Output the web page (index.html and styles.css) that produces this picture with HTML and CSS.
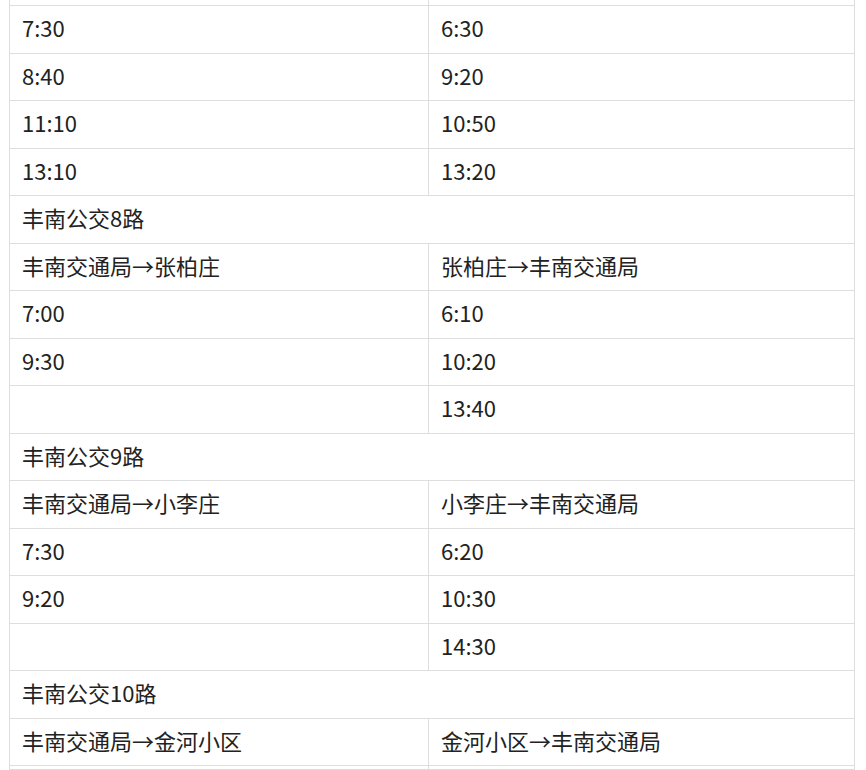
FILE: index.html
```html
<!DOCTYPE html>
<html lang="zh-CN">
<head>
<meta charset="utf-8">
<title>丰南公交时刻表</title>
<link rel="stylesheet" href="styles.css">
</head>
<body>
<table class="schedule">
  <colgroup><col class="c1"><col class="c2"></colgroup>
  <tbody>
    <tr><td></td><td></td></tr>
    <tr><td>7:30</td><td>6:30</td></tr>
    <tr><td>8:40</td><td>9:20</td></tr>
    <tr><td>11:10</td><td>10:50</td></tr>
    <tr><td>13:10</td><td>13:20</td></tr>
    <tr><td colspan="2">丰南公交8路</td></tr>
    <tr><td>丰南交通局→张柏庄</td><td>张柏庄→丰南交通局</td></tr>
    <tr><td>7:00</td><td>6:10</td></tr>
    <tr><td>9:30</td><td>10:20</td></tr>
    <tr><td></td><td>13:40</td></tr>
    <tr><td colspan="2">丰南公交9路</td></tr>
    <tr><td>丰南交通局→小李庄</td><td>小李庄→丰南交通局</td></tr>
    <tr><td>7:30</td><td>6:20</td></tr>
    <tr><td>9:20</td><td>10:30</td></tr>
    <tr><td></td><td>14:30</td></tr>
    <tr><td colspan="2">丰南公交10路</td></tr>
    <tr><td>丰南交通局→金河小区</td><td>金河小区→丰南交通局</td></tr>
    <tr class="cut"><td></td><td></td></tr>
  </tbody>
</table>
</body>
</html>
```
FILE: styles.css
```css
html, body {
  margin: 0;
  padding: 0;
  background: #fff;
  overflow: hidden;
}
body {
  font-family: "Noto Sans CJK SC", "Noto Sans", sans-serif;
  color: #222;
}
.schedule {
  margin: -42.5px 0 0 9px;
  width: 845px;
  border-collapse: collapse;
  table-layout: fixed;
  font-size: 22px;
}
.c1 { width: 419px; }
.c2 { width: 426px; }
.schedule td {
  border: 1px solid #dedede;
  height: 47.5px;
  padding: 0 13px 4px 12px;
  box-sizing: border-box;
  vertical-align: middle;
  line-height: 26px;
  white-space: nowrap;
}
.schedule .cut td {
  height: 4px;
  padding: 0;
}
```
